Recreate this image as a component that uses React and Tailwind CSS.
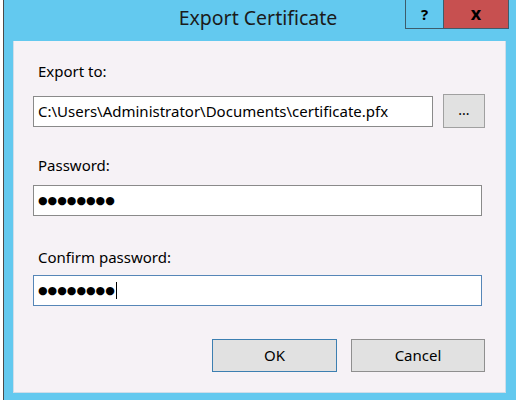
import React from 'react';

const font = { fontFamily: '"Noto Sans", "Open Sans", Arial, sans-serif' };

function Field({ children, focused }) {
  return (
    <div
      className={
        'flex h-[31px] items-center bg-white pl-[4px] border ' +
        (focused ? 'border-[#5686b7]' : 'border-[#8a8a8a]')
      }
    >
      {children}
    </div>
  );
}

function Dots({ cursor }) {
  return (
    <div className="flex items-center">
      <span className="font-['DejaVu_Sans',sans-serif] text-[11px] tracking-[0px] text-black leading-none">
        ●●●●●●●●
      </span>
      {cursor && <span className="ml-[1px] h-[17px] w-px bg-black" />}
    </div>
  );
}

export default function App() {
  return (
    <div className="flex h-[400px] w-[516px] bg-white text-black" style={font}>
      <div className="w-[3px] shrink-0 bg-white" />
      <div className="w-px shrink-0 bg-[#4a4a4a]" />
      <div className="flex flex-1 flex-col bg-[#63c9ef]">
        {/* title bar */}
        <div className="grid h-[41px] grid-cols-[1fr_auto_1fr]">
          <div />
          <div className="mr-[4px] pt-[5px] text-[19.5px] leading-[26px] text-[#1b1b1b]">
            Export Certificate
          </div>
          <div className="flex justify-end pr-[7px]">
            <div className="flex h-[29px] border border-t-0 border-[#3d5c6b]">
              <div className="flex w-[38px] items-center justify-center border-r border-[#3d5c6b] text-[15px] font-bold text-black">
                ?
              </div>
              <div className="flex w-[64px] items-center justify-center bg-[#c75050] pb-[2px] text-[18px] font-bold text-black">
                x
              </div>
            </div>
          </div>
        </div>

        {/* content */}
        <div className="ml-[9px] mr-[10px] flex h-[352px] flex-col border border-t-0 border-[#cfdde9] bg-[#f6f2f6] px-[19px] pt-[20px] text-[15px] text-black">
          <div className="ml-[5px] h-5 leading-5">Export to:</div>
          <div className="mt-[13px] flex h-[34px] items-center">
            <div className="w-[400px]">
              <Field>
                <span className="leading-5 whitespace-nowrap">
                  C:\Users\Administrator\Documents\certificate.pfx
                </span>
              </Field>
            </div>
            <div className="ml-[10px] flex h-[34px] w-[42px] items-center justify-center border border-[#a0a0a0] bg-[#e1e1e1] pb-[4px] text-[14px]">
              ...
            </div>
          </div>

          <div className="mt-[27px] ml-[5px] h-5 leading-5">Password:</div>
          <div className="mt-[10px] mr-[4px]">
            <Field>
              <Dots />
            </Field>
          </div>

          <div className="mt-[31px] ml-[5px] h-5 leading-5">Confirm password:</div>
          <div className="mt-[8px] mr-[4px]">
            <Field focused>
              <Dots cursor />
            </Field>
          </div>

          <div className="mt-[33px] flex justify-end gap-[14px] pr-[1px]">
            <div className="flex h-[33px] w-[125px] items-center justify-center border border-[#3c7fb1] bg-[#e1e1e1]">
              OK
            </div>
            <div className="flex h-[33px] w-[134px] items-center justify-center border border-[#8f8f8f] bg-[#e1e1e1]">
              Cancel
            </div>
          </div>
        </div>
      </div>
    </div>
  );
}
